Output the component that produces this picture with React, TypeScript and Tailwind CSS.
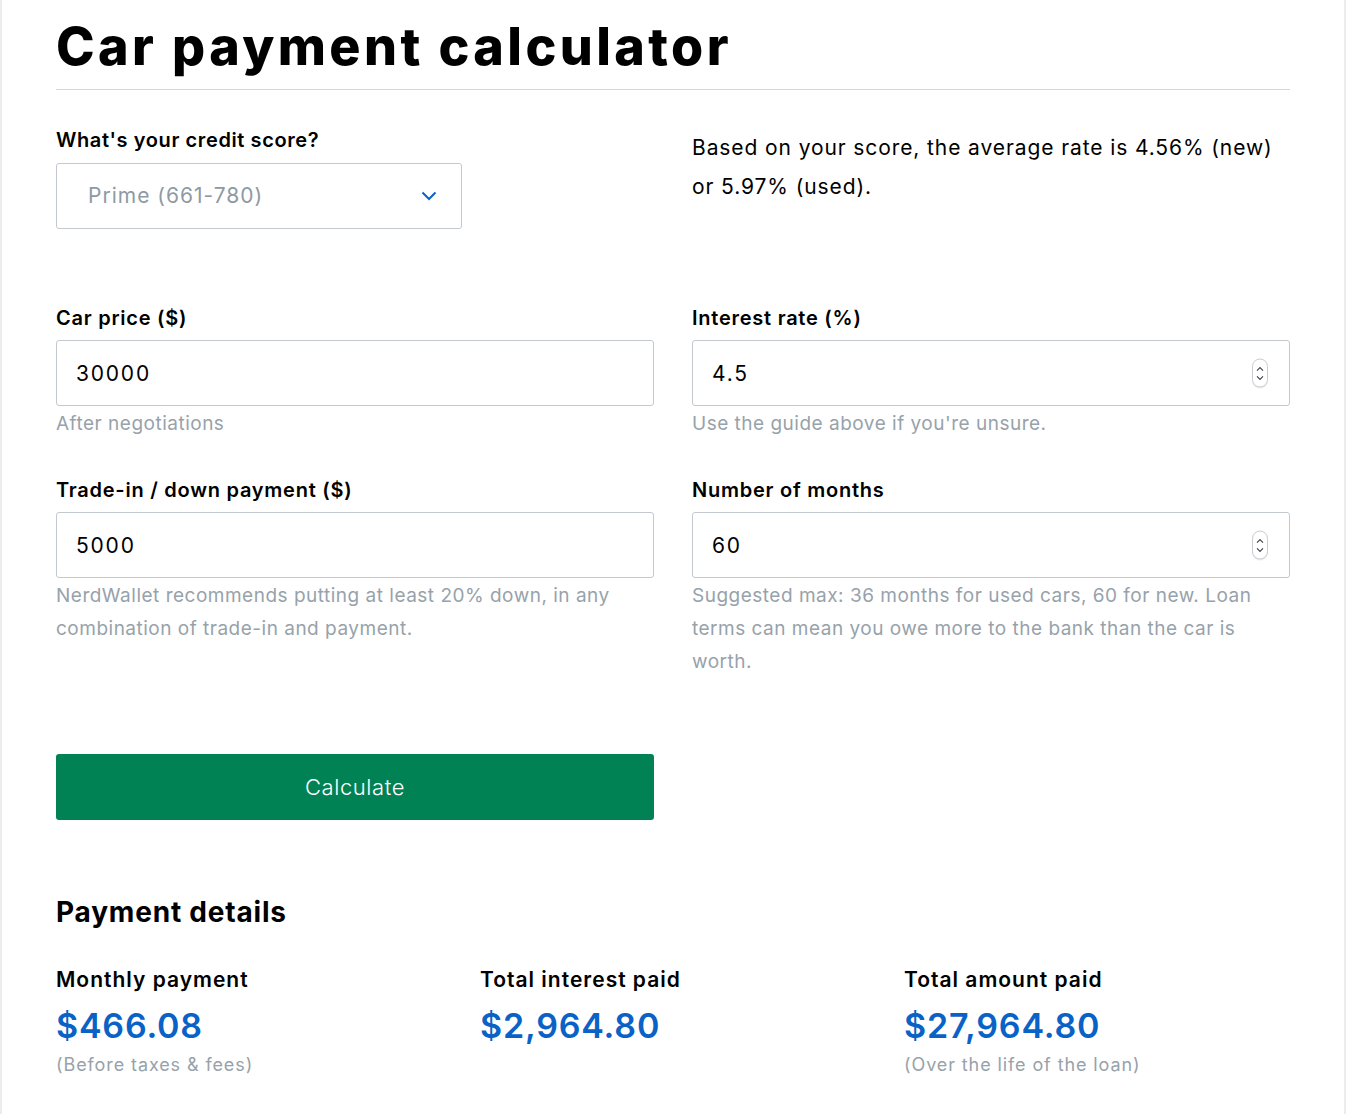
import React from 'react';

const FONT = { fontFamily: 'Inter, "Noto Sans", sans-serif' };

function Stepper() {
  return (
    <div className="absolute right-[22px] top-1/2 -translate-y-1/2 w-[16px] h-[29px] rounded-full border border-[#c9cdd1] bg-white flex flex-col items-center justify-center gap-[4px] shadow-[0_1px_1px_rgba(0,0,0,0.08)]">
      <svg width="8" height="5" viewBox="0 0 8 5" fill="none">
        <path d="M1 4.2 4 1.2 7 4.2" stroke="#444" strokeWidth="1.2" />
      </svg>
      <svg width="8" height="5" viewBox="0 0 8 5" fill="none">
        <path d="M1 0.8 4 3.8 7 0.8" stroke="#444" strokeWidth="1.2" />
      </svg>
    </div>
  );
}

interface FieldProps {
  label: string;
  value: string;
  help: string;
  stepper?: boolean;
}

function Field({ label, value, help, stepper }: FieldProps) {
  return (
    <div>
      <label className="block text-[20px] font-semibold text-black leading-[24px] tracking-[0.75px]">{label}</label>
      <div className="relative mt-[10px]">
        <input
          readOnly
          value={value}
          className="w-full h-[66px] border border-[#c3c9ce] rounded-[3px] px-[19px] text-[21px] tracking-[1.8px] text-black bg-white outline-none"
          style={FONT}
        />
        {stepper && <Stepper />}
      </div>
      <p className="mt-[1px] text-[19px] leading-[33px] tracking-[0.5px] text-[#97a2aa]">{help}</p>
    </div>
  );
}

function Result({ label, value, note }: { label: string; value: string; note?: string }) {
  return (
    <div>
      <p className="text-[21px] font-semibold text-black leading-[26px] tracking-[1px]">{label}</p>
      <p className="mt-[13px] text-[34px] font-semibold text-[#0a62c6] leading-[40px] tracking-[0.8px]">{value}</p>
      {note && <p className="mt-[6px] text-[18px] leading-[26px] tracking-[0.9px] text-[#97a2aa]">{note}</p>}
    </div>
  );
}

export default function App() {
  return (
    <div className="min-h-screen bg-white border-l-2 border-r-2 border-[#ececec]" style={FONT}>
      <div className="px-[54px] pb-[40px]">
        {/* Title */}
        <h1 className="pt-[14px] pb-[9px] text-[52px] font-extrabold leading-[66px] text-black tracking-[3.4px] border-b border-[#d6d6d6]">
          Car payment calculator
        </h1>

        {/* Credit score */}
        <div className="grid grid-cols-2 gap-x-[38px] mt-[38px]">
          <div>
            <label className="block text-[20px] font-semibold text-black leading-[24px] tracking-[0.6px]">What's your credit score?</label>
            <button className="mt-[11px] w-[406px] h-[66px] border border-[#c3c9ce] rounded-[3px] pl-[31px] pr-[24px] flex items-center justify-between bg-white">
              <span className="text-[21px] tracking-[1px] text-[#8e9aa3]">Prime (661-780)</span>
              <svg width="16" height="10" viewBox="0 0 16 10" fill="none">
                <path d="M1.5 1.5 8 8 14.5 1.5" stroke="#0a62c6" strokeWidth="2" />
              </svg>
            </button>
          </div>
          <p className="text-[21px] leading-[39px] tracking-[0.9px] text-black">
            Based on your score, the average rate is 4.56% (new) or 5.97% (used).
          </p>
        </div>

        {/* Inputs */}
        <div className="grid grid-cols-2 gap-x-[38px] mt-[77px]">
          <Field label="Car price ($)" value="30000" help="After negotiations" />
          <Field label="Interest rate (%)" value="4.5" help="Use the guide above if you're unsure." stepper />
        </div>
        <div className="grid grid-cols-2 gap-x-[38px] mt-[38px]">
          <Field
            label="Trade-in / down payment ($)"
            value="5000"
            help="NerdWallet recommends putting at least 20% down, in any combination of trade-in and payment."
          />
          <Field
            label="Number of months"
            value="60"
            help="Suggested max: 36 months for used cars, 60 for new. Loan terms can mean you owe more to the bank than the car is worth."
            stepper
          />
        </div>

        {/* Calculate */}
        <div className="grid grid-cols-2 gap-x-[38px] mt-[76px]">
          <button className="h-[66px] rounded-[3px] bg-[#008254] text-white text-[22px] tracking-[0.6px] font-light">Calculate</button>
        </div>

        {/* Results */}
        <h2 className="mt-[72px] text-[28px] font-bold text-black leading-[40px] tracking-[0.8px]">Payment details</h2>
        <div className="grid grid-cols-3 gap-x-[38px] mt-[35px]">
          <Result label="Monthly payment" value="$466.08" note="(Before taxes & fees)" />
          <Result label="Total interest paid" value="$2,964.80" />
          <Result label="Total amount paid" value="$27,964.80" note="(Over the life of the loan)" />
        </div>
      </div>
    </div>
  );
}
